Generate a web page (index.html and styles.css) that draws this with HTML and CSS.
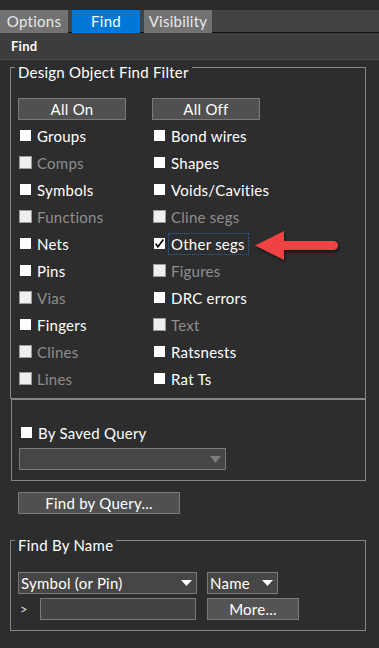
FILE: index.html
```html
<!DOCTYPE html>
<html>
<head>
<meta charset="utf-8">
<link rel="stylesheet" href="styles.css">
</head>
<body>
<div class="topband"></div>
<div class="tabbar">
  <div class="tab">Options</div>
  <div class="tab tab-find">Find</div>
  <div class="tab tab-vis">Visibility</div>
</div>
<div class="header">Find</div>

<div class="group filter">
  <div class="group-title">Design Object Find Filter</div>
  <div class="btn-row">
    <div class="btn btn-all">All On</div>
    <div class="btn btn-all">All Off</div>
  </div>
  <div class="grid">
    <div class="item"><span class="cb cb-en"></span><span class="lbl">Groups</span></div>
    <div class="item"><span class="cb cb-en"></span><span class="lbl">Bond wires</span></div>
    <div class="item"><span class="cb cb-dis"></span><span class="lbl lbl-dis">Comps</span></div>
    <div class="item"><span class="cb cb-en"></span><span class="lbl">Shapes</span></div>
    <div class="item"><span class="cb cb-en"></span><span class="lbl">Symbols</span></div>
    <div class="item"><span class="cb cb-en"></span><span class="lbl">Voids/Cavities</span></div>
    <div class="item"><span class="cb cb-dis"></span><span class="lbl lbl-dis">Functions</span></div>
    <div class="item"><span class="cb cb-dis"></span><span class="lbl lbl-dis">Cline segs</span></div>
    <div class="item"><span class="cb cb-en"></span><span class="lbl">Nets</span></div>
    <div class="item"><span class="cb cb-chk"><svg width="11" height="11" viewBox="0 0 11 11"><polyline points="1.6,5.6 3.9,8.8 9.4,1.4" fill="none" stroke="#000" stroke-width="1.6"/></svg></span><span class="lbl lbl-focus">Other segs</span></div>
    <div class="item"><span class="cb cb-en"></span><span class="lbl">Pins</span></div>
    <div class="item"><span class="cb cb-dis"></span><span class="lbl lbl-dis">Figures</span></div>
    <div class="item"><span class="cb cb-dis"></span><span class="lbl lbl-dis">Vias</span></div>
    <div class="item"><span class="cb cb-en"></span><span class="lbl">DRC errors</span></div>
    <div class="item"><span class="cb cb-en"></span><span class="lbl">Fingers</span></div>
    <div class="item"><span class="cb cb-dis"></span><span class="lbl lbl-dis">Text</span></div>
    <div class="item"><span class="cb cb-dis"></span><span class="lbl lbl-dis">Clines</span></div>
    <div class="item"><span class="cb cb-en"></span><span class="lbl">Ratsnests</span></div>
    <div class="item"><span class="cb cb-dis"></span><span class="lbl lbl-dis">Lines</span></div>
    <div class="item"><span class="cb cb-en"></span><span class="lbl">Rat Ts</span></div>
  </div>
</div>

<div class="group query">
  <div class="item qrow"><span class="cb cb-en"></span><span class="lbl">By Saved Query</span></div>
  <div class="dd dd-saved"><span></span><svg width="11" height="7" viewBox="0 0 11 7"><polygon points="0,0 11,0 5.5,7" fill="#7c7c7c"/></svg></div>
</div>

<div class="btn btn-query">Find by Query...</div>

<div class="group byname">
  <div class="group-title">Find By Name</div>
  <div class="name-row">
    <div class="dd dd-type"><span class="dd-text">Symbol (or Pin)</span><svg width="11" height="6" viewBox="0 0 11 6"><polygon points="0,0 11,0 5.5,6" fill="#fff"/></svg></div>
    <div class="dd dd-name"><span class="dd-text">Name</span><svg width="11" height="6" viewBox="0 0 11 6"><polygon points="0,0 11,0 5.5,6" fill="#fff"/></svg></div>
  </div>
  <div class="name-row row2">
    <span class="prompt">&gt;</span>
    <div class="input"></div>
    <div class="btn btn-more">More...</div>
  </div>
</div>

<svg class="arrow" width="96" height="42" viewBox="0 0 96 42">
  <path d="M5,19.5 L34,5 L34,15 L83.5,15 A4.5,4.5 0 0 1 83.5,24 L34,24 L34,34 Z" fill="#ef4242"/>
</svg>
</body>
</html>
```

FILE: styles.css
```css
* { box-sizing: border-box; }
html, body { margin: 0; padding: 0; }
body {
  width: 379px;
  height: 648px;
  background: #2d2d2d;
  font-family: Lato, "Open Sans", sans-serif;
  font-size: 15px;
  letter-spacing: 0.25px;
  color: #fff;
  position: relative;
  overflow: hidden;
}
.topband { height: 10px; background: #2a2a2a; }
.tabbar {
  height: 23px;
  display: flex;
  background: linear-gradient(to top, #0e0e0e 0, #0e0e0e 1px, #434343 1px);
}
.tab {
  width: 68px;
  height: 23px;
  padding-top: 1px;
  line-height: 21px;
  text-align: center;
  background: #727272;
  color: #e8e8e8;
}
.tab-find { margin-left: 4px; background: #0078d7; color: #fff; }
.tab-vis { margin-left: 4px; }
.header {
  height: 27px;
  padding: 1px 0 0 11px;
  line-height: 25px;
  font-size: 13px;
  font-weight: 700;
  background: #3d3d3d;
  border-bottom: 1px solid #4d4d4d;
}
.group { border: 1px solid #858585; }
.group-title {
  display: table;
  margin: -5px 0 0 -3px;
  padding: 0 3px;
  line-height: 18px;
  background: #2d2d2d;
  white-space: nowrap;
}
.filter {
  margin: 7px 0 0 10px;
  width: 356px;
  padding: 0 0 6px 7px;
}
.btn-row { display: flex; gap: 26px; margin-top: 17px; }
.btn {
  height: 22px;
  padding-top: 1px;
  line-height: 19px;
  text-align: center;
  background: #505050;
  border: 1px solid #7a7a7a;
  white-space: nowrap;
}
.btn-all { width: 108px; }
.grid {
  margin-top: 2px;
  display: grid;
  grid-template-columns: 134px 134px;
  grid-auto-rows: 27px;
}
.item { display: flex; align-items: center; }
.cb {
  flex: none;
  width: 13px;
  height: 13px;
  margin-left: 1px;
  display: flex;
  align-items: center;
  justify-content: center;
}
.cb-en::before { content: ""; width: 11px; height: 11px; background: #fff; }
.cb-dis { border: 1px solid #9b9b9b; background: #efefef; }
.cb-chk svg { display: block; background: #fff; }
.lbl { margin-left: 5px; line-height: 18px; white-space: nowrap; }
.lbl-dis { color: #8e8e8e; }
.lbl-focus {
  margin-left: 2px;
  padding: 0 3px 0 2px;
  line-height: 20px;
  border: 1px dotted #2a6ab3;
}
.query {
  margin-left: 11px;
  width: 355px;
  padding: 19px 0 10px 7px;
}
.qrow { height: 27px; }
.dd {
  height: 22px;
  display: flex;
  align-items: center;
  justify-content: space-between;
  padding: 0 4px 0 2px;
  background: #464646;
  border: 1px solid #7a7a7a;
}
.dd svg { display: block; flex: none; }
.dd-text { line-height: 20px; white-space: nowrap; }
.dd-saved { width: 207px; margin-top: 2px; }
.btn-query { margin: 11px 0 0 18px; width: 162px; }
.byname {
  margin: 26px 0 0 10px;
  width: 356px;
  padding: 0 0 10px 7px;
}
.name-row { display: flex; margin-top: 18px; gap: 10px; }
.row2 { margin-top: 4px; gap: 0; align-items: center; }
.dd-type { width: 179px; }
.dd-name { width: 71px; }
.prompt { width: 22px; padding-left: 2px; font-size: 13px; color: #e0e0e0; line-height: 22px; }
.input {
  width: 156px;
  height: 22px;
  background: #434343;
  border: 1px solid #7a7a7a;
}
.btn-more { width: 92px; margin-left: 11px; background: #545454; }
.arrow {
  position: absolute;
  left: 250px;
  top: 226px;
  filter: drop-shadow(1px 2px 1.5px rgba(0,0,0,0.55));
}
```
